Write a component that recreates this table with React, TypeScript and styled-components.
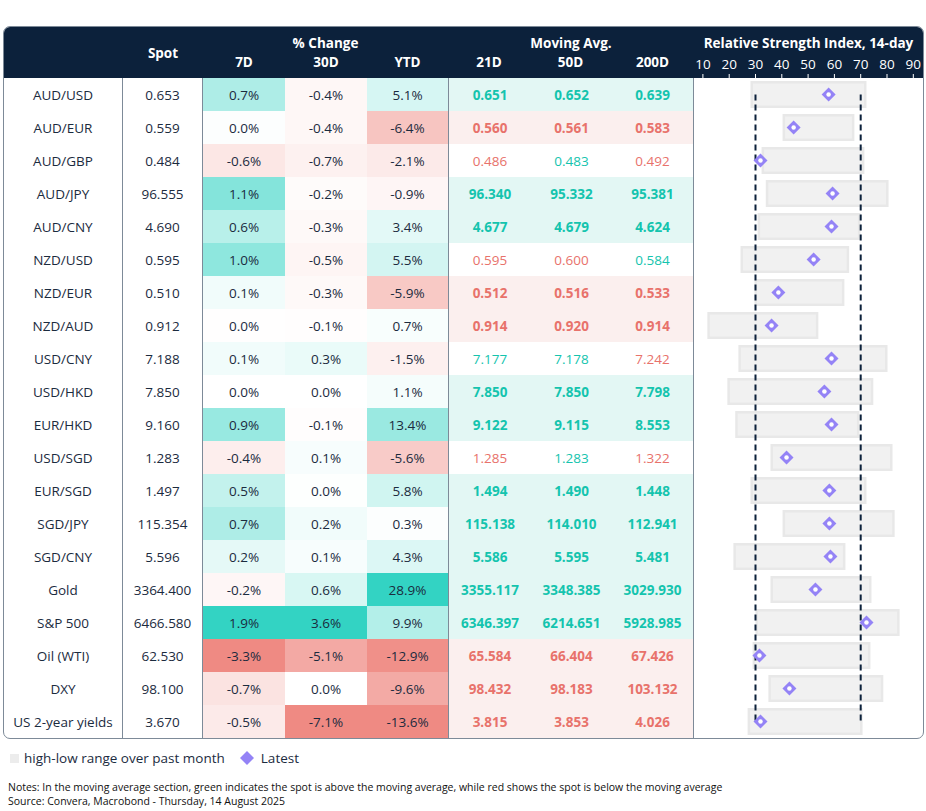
import React from "react";
import styled, { createGlobalStyle } from "styled-components";

type Tone = "g" | "r";

interface Row {
  name: string;
  spot: string;
  pct: [number, number, number];
  ma: [string, Tone][];
  rsi: [number, number, number]; // low, high, latest
}

const rows: Row[] = [
  { name: "AUD/USD", spot: "0.653", pct: [0.7, -0.4, 5.1], ma: [["0.651", "g"], ["0.652", "g"], ["0.639", "g"]], rsi: [28.1, 72.2, 57.8] },
  { name: "AUD/EUR", spot: "0.559", pct: [0.02, -0.4, -6.4], ma: [["0.560", "r"], ["0.561", "r"], ["0.583", "r"]], rsi: [40.3, 67.6, 44.5] },
  { name: "AUD/GBP", spot: "0.484", pct: [-0.6, -0.7, -2.1], ma: [["0.486", "r"], ["0.483", "g"], ["0.492", "r"]], rsi: [32.3, 71.4, 31.9] },
  { name: "AUD/JPY", spot: "96.555", pct: [1.1, -0.2, -0.9], ma: [["96.340", "g"], ["95.332", "g"], ["95.381", "g"]], rsi: [33.9, 80.6, 59.3] },
  { name: "AUD/CNY", spot: "4.690", pct: [0.6, -0.3, 3.4], ma: [["4.677", "g"], ["4.679", "g"], ["4.624", "g"]], rsi: [30.8, 69.9, 58.9] },
  { name: "NZD/USD", spot: "0.595", pct: [1.0, -0.5, 5.5], ma: [["0.595", "r"], ["0.600", "r"], ["0.584", "g"]], rsi: [24.3, 65.6, 52.1] },
  { name: "NZD/EUR", spot: "0.510", pct: [0.1, -0.3, -5.9], ma: [["0.512", "r"], ["0.516", "r"], ["0.533", "r"]], rsi: [29.6, 63.8, 38.7] },
  { name: "NZD/AUD", spot: "0.912", pct: [-0.02, -0.1, 0.7], ma: [["0.914", "r"], ["0.920", "r"], ["0.914", "r"]], rsi: [11.7, 53.9, 36.1] },
  { name: "USD/CNY", spot: "7.188", pct: [0.1, 0.3, -1.5], ma: [["7.177", "g"], ["7.178", "g"], ["7.242", "r"]], rsi: [23.5, 80.2, 58.9] },
  { name: "USD/HKD", spot: "7.850", pct: [0, 0, 1.1], ma: [["7.850", "g"], ["7.850", "g"], ["7.798", "g"]], rsi: [19.3, 74.8, 56.2] },
  { name: "EUR/HKD", spot: "9.160", pct: [0.9, -0.1, 13.4], ma: [["9.122", "g"], ["9.115", "g"], ["8.553", "g"]], rsi: [22.3, 69.5, 58.9] },
  { name: "USD/SGD", spot: "1.283", pct: [-0.4, 0.1, -5.6], ma: [["1.285", "r"], ["1.283", "g"], ["1.322", "r"]], rsi: [35.7, 82.1, 41.8] },
  { name: "EUR/SGD", spot: "1.497", pct: [0.5, 0.02, 5.8], ma: [["1.494", "g"], ["1.490", "g"], ["1.448", "g"]], rsi: [28.1, 72.2, 58.1] },
  { name: "SGD/JPY", spot: "115.354", pct: [0.7, 0.2, 0.3], ma: [["115.138", "g"], ["114.010", "g"], ["112.941", "g"]], rsi: [40.3, 82.9, 58.1] },
  { name: "SGD/CNY", spot: "5.596", pct: [0.2, 0.1, 4.3], ma: [["5.586", "g"], ["5.595", "g"], ["5.481", "g"]], rsi: [21.6, 64.2, 58.5] },
  { name: "Gold", spot: "3364.400", pct: [-0.2, 0.6, 28.9], ma: [["3355.117", "g"], ["3348.385", "g"], ["3029.930", "g"]], rsi: [35.7, 74.1, 52.8] },
  { name: "S&P 500", spot: "6466.580", pct: [1.9, 3.6, 9.9], ma: [["6346.397", "g"], ["6214.651", "g"], ["5928.985", "g"]], rsi: [30.0, 84.8, 72.2] },
  { name: "Oil (WTI)", spot: "62.530", pct: [-3.3, -5.1, -12.9], ma: [["65.584", "r"], ["66.404", "r"], ["67.426", "r"]], rsi: [28.9, 73.7, 31.5] },
  { name: "DXY", spot: "98.100", pct: [-0.7, 0, -9.6], ma: [["98.432", "r"], ["98.183", "r"], ["103.132", "r"]], rsi: [34.9, 78.6, 42.9] },
  { name: "US 2-year yields", spot: "3.670", pct: [-0.5, -7.1, -13.6], ma: [["3.815", "r"], ["3.853", "r"], ["4.026", "r"]], rsi: [27.0, 70.7, 31.9] },
];

const NAVY = "#0c213b";
const INK = "#1b2b3e";
const GREEN = "#14c4ae";
const RED = "#e8726b";
const PURPLE = "#9483f6";

const TEAL_RGB = [51, 211, 195];
const RED_RGB = [239, 138, 131];

// colour scale per column: max gain -> full teal, max loss -> full red
const heat = (v: number, col: number) => {
  const vals = rows.map((r) => r.pct[col]);
  const max = Math.max(...vals);
  const min = Math.min(...vals);
  const base = v >= 0 ? TEAL_RGB : RED_RGB;
  const t = Math.pow(Math.min(1, v >= 0 ? v / max : v / min), 0.92);
  const c = base.map((b) => Math.round(255 - t * (255 - b)));
  return `rgb(${c[0]}, ${c[1]}, ${c[2]})`;
};

const fmtPct = (v: number) => (Math.abs(v) < 0.05 ? "0.0" : v.toFixed(1)) + "%";

const ROW_H = 33;
const CHART_W = 229;
const rsiX = (v: number) => 61.5 + (v - 30) * 2.63;

const GlobalStyle = createGlobalStyle`
  body {
    margin: 0;
    background: #fff;
    font-family: "Open Sans", "Noto Sans", sans-serif;
    color: ${INK};
  }
`;

const Page = styled.div`
  padding: 26px 0 0 3px;
  width: 921px;
`;

const Card = styled.div`
  border: 1px solid #7d8a98;
  border-radius: 7px;
  overflow: hidden;
  width: 921px;
  box-sizing: border-box;
`;

const Header = styled.div`
  display: grid;
  grid-template-columns: 119px 80px 82px 82px 81px 82px 81px 83px 229px;
  grid-template-rows: 26px 25px;
  background: ${NAVY};
  color: #fff;
  font-weight: 700;
  font-size: 13.5px;
`;

const HeadCell = styled.div<{ $col: string; $row: string; $align?: string }>`
  grid-column: ${(p) => p.$col};
  grid-row: ${(p) => p.$row};
  display: flex;
  justify-content: center;
  align-items: ${(p) => p.$align || "center"};
`;

const GroupTitle = styled(HeadCell)`
  padding-top: 6px;
`;

const Axis = styled.svg`
  grid-column: 9;
  grid-row: 2;
  display: block;
`;

const Body = styled.div`
  display: flex;
`;

const Rows = styled.div`
  width: 690px;
`;

const TableRow = styled.div`
  display: grid;
  grid-template-columns: 119px 80px 82px 82px 81px 246px;
  height: ${ROW_H}px;
  font-size: 13.5px;
`;

const Cell = styled.div<{ $bg?: string; $divider?: boolean }>`
  display: flex;
  align-items: center;
  justify-content: center;
  background: ${(p) => p.$bg || "transparent"};
  border-right: ${(p) => (p.$divider ? "1px solid #7d8a98" : "none")};
  white-space: nowrap;
`;

const MAGroup = styled.div<{ $tint?: Tone }>`
  display: grid;
  grid-template-columns: 82px 81px 81px;
  border-left: 1px solid #7d8a98;
  border-right: 1px solid #7d8a98;
  background: ${(p) => (p.$tint === "g" ? "#e3f7f4" : p.$tint === "r" ? "#fbefee" : "#fff")};
`;

const MAValue = styled.div<{ $tone: Tone; $bold: boolean }>`
  display: flex;
  align-items: center;
  justify-content: center;
  color: ${(p) => (p.$tone === "g" ? GREEN : RED)};
  font-weight: ${(p) => (p.$bold ? 700 : 400)};
`;

const Chart = styled.svg`
  display: block;
  flex: none;
`;

const Legend = styled.div`
  display: flex;
  align-items: center;
  gap: 6px;
  padding: 10px 0 0 7px;
  font-size: 13.5px;
  color: ${INK};
`;

const Swatch = styled.span`
  width: 9px;
  height: 9px;
  background: #ececec;
  margin-right: -1px;
`;

const LegendGap = styled.span`
  width: 2px;
`;

const Notes = styled.div`
  padding: 13px 0 0 5px;
  font-size: 10.5px;
  line-height: 14px;
  color: #111;
`;

const Diamond = ({ x, y, r }: { x: number; y: number; r: number }) => (
  <g>
    <polygon points={`${x},${y - r} ${x + r},${y} ${x},${y + r} ${x - r},${y}`} fill={PURPLE} />
    <circle cx={x} cy={y} r={r * 0.32} fill="#fff" />
  </g>
);

const ticks = [10, 20, 30, 40, 50, 60, 70, 80, 90];

export default function App() {
  const chartH = rows.length * ROW_H;
  const firstMid = ROW_H / 2;
  const lastMid = chartH - ROW_H / 2;

  return (
    <>
      <GlobalStyle />
      <Page>
        <Card>
          <Header>
            <HeadCell $col="2" $row="1 / 3">Spot</HeadCell>
            <GroupTitle $col="3 / 6" $row="1">% Change</GroupTitle>
            <HeadCell $col="3" $row="2" $align="flex-start">7D</HeadCell>
            <HeadCell $col="4" $row="2" $align="flex-start">30D</HeadCell>
            <HeadCell $col="5" $row="2" $align="flex-start">YTD</HeadCell>
            <GroupTitle $col="6 / 9" $row="1">Moving Avg.</GroupTitle>
            <HeadCell $col="6" $row="2" $align="flex-start">21D</HeadCell>
            <HeadCell $col="7" $row="2" $align="flex-start">50D</HeadCell>
            <HeadCell $col="8" $row="2" $align="flex-start">200D</HeadCell>
            <GroupTitle $col="9" $row="1">Relative Strength Index, 14-day</GroupTitle>
            <Axis width={CHART_W} height={25} viewBox={`0 0 ${CHART_W} 25`}>
              {ticks.map((t) => (
                <g key={t}>
                  <text
                    x={rsiX(t)}
                    y={16}
                    textAnchor="middle"
                    fill="#fff"
                    fontSize="13.5"
                    fontWeight="400"
                    fontFamily="'Open Sans', sans-serif"
                  >
                    {t}
                  </text>
                  <line x1={rsiX(t)} x2={rsiX(t)} y1={21} y2={25} stroke="#fff" strokeWidth={1} />
                </g>
              ))}
            </Axis>
          </Header>
          <Body>
            <Rows>
              {rows.map((r) => {
                const tones = r.ma.map((m) => m[1]);
                const uniform = tones.every((t) => t === tones[0]);
                return (
                  <TableRow key={r.name}>
                    <Cell $divider>{r.name}</Cell>
                    <Cell $divider>{r.spot}</Cell>
                    {r.pct.map((v, i) => (
                      <Cell key={i} $bg={heat(v, i)}>
                        {fmtPct(v)}
                      </Cell>
                    ))}
                    <MAGroup $tint={uniform ? tones[0] : undefined}>
                      {r.ma.map(([val, tone], i) => (
                        <MAValue key={i} $tone={tone} $bold={uniform}>
                          {val}
                        </MAValue>
                      ))}
                    </MAGroup>
                  </TableRow>
                );
              })}
            </Rows>
            <Chart width={CHART_W} height={chartH} viewBox={`0 0 ${CHART_W} ${chartH}`}>
              {rows.map((r, i) => {
                const x1 = rsiX(r.rsi[0]);
                const x2 = rsiX(r.rsi[1]);
                return (
                  <rect
                    key={r.name}
                    x={x1 + 1.25}
                    y={i * ROW_H + 3 + 1.25}
                    width={x2 - x1 - 2.5}
                    height={27 - 2.5}
                    fill="#f1f1f1"
                    stroke="#e8e8e8"
                    strokeWidth={2.5}
                  />
                );
              })}
              {[30, 70].map((v) => (
                <line
                  key={v}
                  x1={rsiX(v)}
                  x2={rsiX(v)}
                  y1={firstMid}
                  y2={lastMid}
                  stroke={NAVY}
                  strokeWidth={2}
                  strokeDasharray="6 4"
                />
              ))}
              {rows.map((r, i) => (
                <Diamond key={r.name} x={rsiX(r.rsi[2])} y={i * ROW_H + ROW_H / 2} r={7} />
              ))}
            </Chart>
          </Body>
        </Card>
        <Legend>
          <Swatch />
          <span>high-low range over past month</span>
          <LegendGap />
          <svg width="16" height="16" viewBox="0 0 16 16">
            <polygon points="8,1 15,8 8,15 1,8" fill={PURPLE} />
          </svg>
          <span>Latest</span>
        </Legend>
        <Notes>
          Notes: In the moving average section, green indicates the spot is above the moving average, while red shows the spot is below the moving average
          <br />
          Source: Convera, Macrobond - Thursday, 14 August 2025
        </Notes>
      </Page>
    </>
  );
}
